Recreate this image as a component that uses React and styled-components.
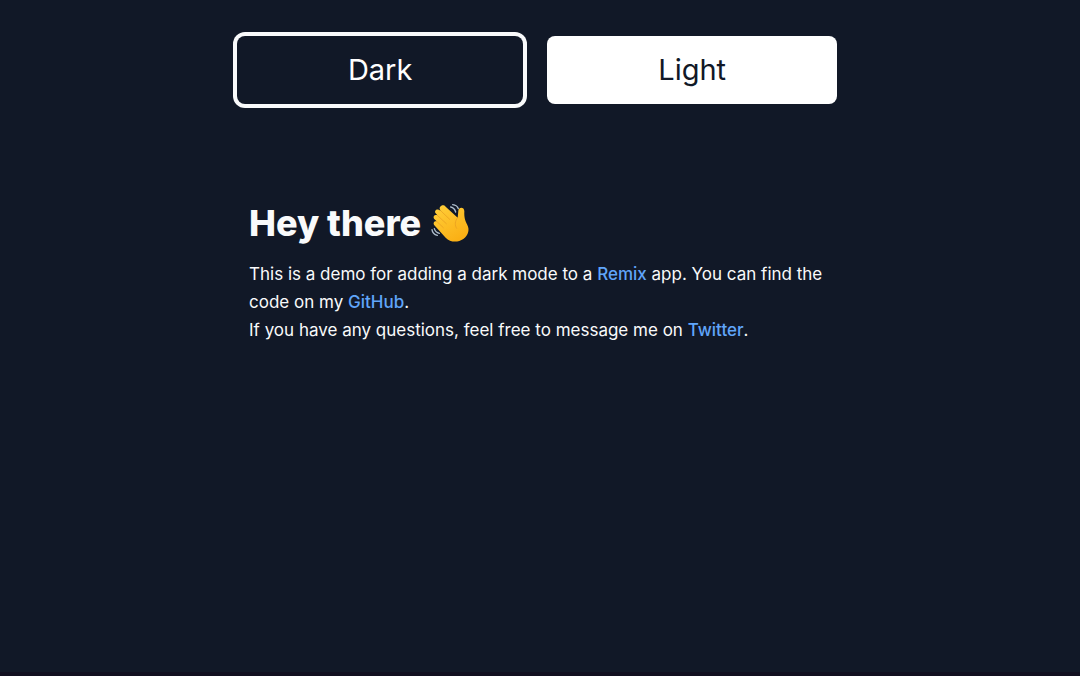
import React, { useState } from "react";
import styled, { createGlobalStyle } from "styled-components";

const GlobalStyle = createGlobalStyle`
  *, *::before, *::after { box-sizing: border-box; }
  body {
    margin: 0;
    background: #111827;
    font-family: Inter, "Liberation Sans", sans-serif;
  }
`;

const Page = styled.div`
  min-height: 100vh;
  padding: 36px 6px 36px 0;
  background: #111827;
  border-bottom: 4px solid #110f20;
  color: #f9fafb;
`;

const Container = styled.main`
  width: 100%;
  max-width: 600px;
  margin: 0 auto;
`;

const ThemeSwitch = styled.div`
  display: flex;
  gap: 24px;
`;

const ThemeButton = styled.button`
  flex: 1 1 auto;
  padding: 16px;
  border: 0;
  border-radius: 8px;
  background: ${(p) => (p.$tone === "dark" ? "#111827" : "#ffffff")};
  color: ${(p) => (p.$tone === "dark" ? "#ffffff" : "#111827")};
  box-shadow: ${(p) => (p.$selected ? "0 0 0 4px #f9fafb" : "none")};
  font-family: inherit;
  font-size: 29px;
  font-weight: 400;
  line-height: 36px;
  cursor: pointer;
`;

const Intro = styled.section`
  margin-top: 96px;
  padding: 0 12px;
`;

const Title = styled.h1`
  display: flex;
  align-items: center;
  gap: 8px;
  margin: 0;
  font-size: 36px;
  font-weight: 800;
  line-height: 46px;
`;

const Wave = styled.svg`
  width: 42px;
  height: 42px;
`;

const Copy = styled.div`
  margin-top: 14px;
`;

const Text = styled.p`
  margin: 0;
  font-size: 17px;
  line-height: 28px;
`;

const TextLink = styled.a`
  color: #60a5fa;
  font-weight: 500;
  text-decoration: none;
`;

function WavingHand() {
  return (
    <Wave viewBox="0 0 126 126" role="img" aria-label="Waving hand">
      <defs>
        <linearGradient id="skin" x1="0" y1="0" x2="0.6" y2="1">
          <stop offset="0" stopColor="#ffd03b" />
          <stop offset="1" stopColor="#fbb015" />
        </linearGradient>
      </defs>
      <path
        fill="url(#skin)"
        d="M37 11 C31 14 30 20 35 26 L29 23 C22 20 15 27 20 34 L25 40 C17 36 11 43 15 50 L23 58 C16 56 11 63 16 70 L50 107 C64 122 87 122 103 111 C119 99 122 82 115 69 C108 56 105 46 106 28 C106 15 90 14 88 26 L86 47 L50 14 C46 9 41 9 37 11 Z"
      />
      <g fill="none" stroke="#e59a20" strokeWidth="2" strokeLinecap="round">
        <path d="M35 26 L62 52 M25 40 L52 65 M23 58 L43 77" />
        <path d="M86 47 C77 57 77 71 83 79" />
      </g>
      <g fill="none" stroke="#aebdcc" strokeWidth="4" strokeLinecap="round">
        <path d="M65 15 C73 17 78 22 80 30 M71 8 C80 9 86 14 88 20" />
        <path d="M16 80 C18 88 23 92 31 94 M9 83 C10 92 16 98 25 100" />
      </g>
    </Wave>
  );
}

export default function App() {
  const [theme, setTheme] = useState("dark");
  return (
    <Page>
      <GlobalStyle />
      <Container>
        <ThemeSwitch>
          <ThemeButton type="button" $tone="dark" $selected={theme === "dark"} onClick={() => setTheme("dark")}>
            Dark
          </ThemeButton>
          <ThemeButton type="button" $tone="light" $selected={theme === "light"} onClick={() => setTheme("light")}>
            Light
          </ThemeButton>
        </ThemeSwitch>
        <Intro>
          <Title>
            Hey there <WavingHand />
          </Title>
          <Copy>
            <Text>
              This is a demo for adding a dark mode to a <TextLink href="#remix">Remix</TextLink> app. You can find
              the code on my <TextLink href="#github">GitHub</TextLink>.
            </Text>
            <Text>
              If you have any questions, feel free to message me on <TextLink href="#twitter">Twitter</TextLink>.
            </Text>
          </Copy>
        </Intro>
      </Container>
    </Page>
  );
}
